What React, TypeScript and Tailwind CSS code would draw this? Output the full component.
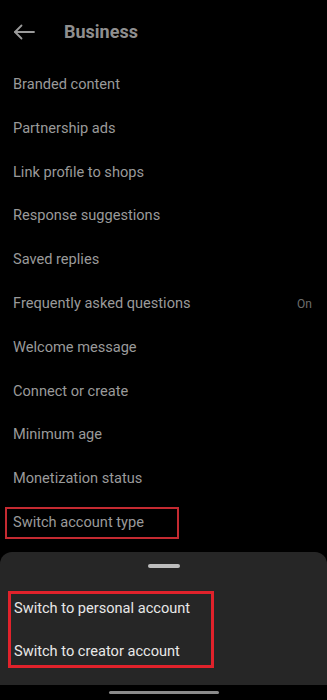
import React from "react";

const items = [
  { label: "Branded content" },
  { label: "Partnership ads" },
  { label: "Link profile to shops" },
  { label: "Response suggestions" },
  { label: "Saved replies" },
  { label: "Frequently asked questions", value: "On" },
  { label: "Welcome message" },
  { label: "Connect or create" },
  { label: "Minimum age" },
  { label: "Monetization status" },
];

export default function App() {
  return (
    <div
      className="w-[327px] h-[700px] bg-black flex flex-col overflow-hidden"
      style={{ fontFamily: "Roboto, 'Noto Sans', sans-serif" }}
    >
      {/* HEADER */}
      <div className="h-[63px] flex items-center pl-[13px]">
        <svg width="22" height="16" viewBox="0 0 22 16" fill="none" stroke="#9a9a9a" strokeWidth="1.8" strokeLinecap="round" strokeLinejoin="round">
          <path d="M21 8H2" />
          <path d="M8.5 1.5L2 8l6.5 6.5" />
        </svg>
        <span className="ml-[29px] text-[18px] font-bold text-[#8f8f8f]">Business</span>
      </div>

      {/* LIST */}
      <div className="flex flex-col">
        {items.map((it) => (
          <div key={it.label} className="h-[43.8px] flex items-center justify-between pl-[13px] pr-[15px]">
            <span className="text-[14.6px] text-[#9a9a9a]">{it.label}</span>
            {it.value && <span className="text-[12px] text-[#6e6e6e]">{it.value}</span>}
          </div>
        ))}
        <div className="h-[43.8px] flex items-center pl-[5px]">
          <div className="w-[174px] h-[32px] border-2 border-[#c42a31] flex items-center pl-[6px]">
            <span className="text-[14.6px] text-[#9a9a9a]">Switch account type</span>
          </div>
        </div>
      </div>

      {/* BOTTOM SHEET */}
      <div className="mt-auto h-[133px] bg-[#262626] rounded-t-[12px] flex flex-col">
        <div className="flex justify-center pt-[12px]">
          <div className="w-[32px] h-[4px] rounded-full bg-[#bdbdbd]" />
        </div>
        <div className="ml-[8px] mt-[23px] w-[206px] h-[77px] border-[3px] border-[#e0222b] flex flex-col justify-center gap-[27px] pl-[3px]">
          <span className="text-[14.6px] leading-[16px] text-[#e8e8e8]">Switch to personal account</span>
          <span className="text-[14.6px] leading-[16px] text-[#e8e8e8]">Switch to creator account</span>
        </div>
      </div>

      {/* NAV BAR */}
      <div className="h-[15px] bg-black flex justify-center pt-[6px]">
        <div className="w-[110px] h-[3px] rounded-full bg-[#8a8a8a]" />
      </div>
    </div>
  );
}
